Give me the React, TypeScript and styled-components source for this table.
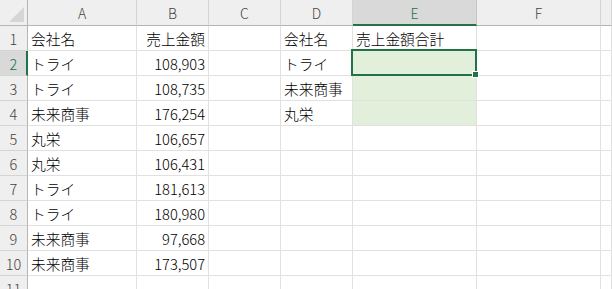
import React, {FC} from "react";
import styled, {createGlobalStyle} from "styled-components";

const GlobalStyle = createGlobalStyle`
    html, body {
        margin: 0;
        padding: 0;
        background: #fff;
        overflow: hidden;
    }
`;

const green = "#217346";
const gridLine = "#e1e1e1";
const headerLine = "#b5b5b5";

const Sheet = styled.div`
    display: grid;
    grid-template-columns: 28px 109px 72px 72px 72px 124px 124px 1fr;
    grid-template-rows: 26px repeat(11, 25px);
    width: 612px;
    height: 289px;
    overflow: hidden;
    font-family: "Noto Sans CJK JP", "Noto Sans", sans-serif;
    color: #000;
`;

const Corner = styled.div`
    position: relative;
    box-sizing: border-box;
    background: #efefef;
    border-right: 1px solid ${headerLine};
    border-bottom: 1px solid ${headerLine};

    &::after {
        content: "";
        position: absolute;
        right: 3px;
        bottom: 3px;
        width: 0;
        height: 0;
        border-left: 15px solid transparent;
        border-bottom: 15px solid #d6d6d6;
    }
`;

const ColHeader = styled.div<{ $active?: boolean }>`
    box-sizing: border-box;
    display: flex;
    align-items: center;
    justify-content: center;
    background: ${p => (p.$active ? "#d9d9d9" : "#efefef")};
    border-right: 1px solid ${p => (p.$active ? "#c6c6c6" : "#d4d4d4")};
    border-bottom: ${p => (p.$active ? `2px solid ${green}` : `1px solid ${headerLine}`)};
    color: ${p => (p.$active ? green : "#444")};
    font-size: 14px;
    font-weight: 300;
    padding-top: ${p => (p.$active ? "1px" : "0")};
`;

const RowHeader = styled.div<{ $active?: boolean }>`
    box-sizing: border-box;
    display: flex;
    align-items: center;
    justify-content: center;
    background: ${p => (p.$active ? "#d9d9d9" : "#efefef")};
    border-right: ${p => (p.$active ? `2px solid ${green}` : `1px solid ${headerLine}`)};
    border-bottom: 1px solid #d4d4d4;
    color: ${p => (p.$active ? green : "#444")};
    font-size: 14.5px;
    font-weight: 300;
    padding-left: ${p => (p.$active ? "1px" : "0")};
`;

const Cell = styled.div<{ $align?: "left" | "right"; $fill?: boolean }>`
    position: relative;
    box-sizing: border-box;
    display: flex;
    align-items: center;
    justify-content: ${p => (p.$align === "right" ? "flex-end" : "flex-start")};
    padding: 1px 3px 0 3px;
    background: ${p => (p.$fill ? "#e2efda" : "#fff")};
    border-right: 1px solid ${gridLine};
    border-bottom: 1px solid ${gridLine};
    font-size: 14.7px;
    font-weight: 300;
    white-space: nowrap;
`;

// active cell outline with its fill handle
const Selection = styled.div`
    position: absolute;
    left: -2px;
    top: -2px;
    right: -1px;
    bottom: -1px;
    border: 2px solid ${green};
    pointer-events: none;
    z-index: 2;

    &::after {
        content: "";
        position: absolute;
        right: -4px;
        bottom: -4px;
        width: 5px;
        height: 5px;
        background: ${green};
        border: 1px solid #fff;
    }
`;

const columns = ["A", "B", "C", "D", "E", "F", ""];

const sales: [string, string][] = [
    ["トライ", "108,903"],
    ["トライ", "108,735"],
    ["未来商事", "176,254"],
    ["丸栄", "106,657"],
    ["丸栄", "106,431"],
    ["トライ", "181,613"],
    ["トライ", "180,980"],
    ["未来商事", "97,668"],
    ["未来商事", "173,507"],
];

const summary = ["トライ", "未来商事", "丸栄"];

const App: FC = () => {
    const rows: React.ReactNode[] = [];

    for (let r = 1; r <= 11; r++) {
        let a = "";
        let b = "";
        let d = "";
        let e = "";
        if (r === 1) {
            a = "会社名";
            b = "売上金額";
            d = "会社名";
            e = "売上金額合計";
        } else if (r <= 10) {
            [a, b] = sales[r - 2];
            d = summary[r - 2] ?? "";
        }
        const filled = r >= 2 && r <= 4;

        rows.push(
            <React.Fragment key={r}>
                <RowHeader $active={r === 2}>{r}</RowHeader>
                <Cell>{a}</Cell>
                <Cell $align="right">{b}</Cell>
                <Cell />
                <Cell>{d}</Cell>
                <Cell $fill={filled}>
                    {e}
                    {r === 2 && <Selection />}
                </Cell>
                <Cell />
                <Cell />
            </React.Fragment>
        );
    }

    return (
        <>
            <GlobalStyle />
            <Sheet>
                <Corner />
                {columns.map((c, i) => (
                    <ColHeader key={i} $active={c === "E"}>{c}</ColHeader>
                ))}
                {rows}
            </Sheet>
        </>
    );
};

export default App;
